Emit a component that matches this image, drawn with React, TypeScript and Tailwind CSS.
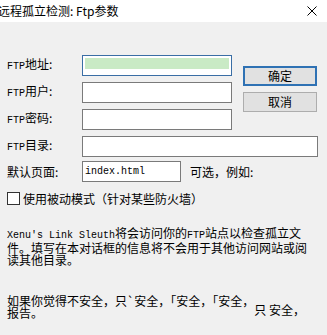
import React from 'react';

const cjk = { fontFamily: '"Noto Sans CJK SC", "Microsoft YaHei", sans-serif' };
const mono = { fontFamily: '"Liberation Mono", "Courier New", monospace' };

function Latin({ children }: { children: React.ReactNode }) {
    return (
        <span className="text-[10px]" style={mono}>
            {children}
        </span>
    );
}

function Field({ label, width, focused }: { label: string; width: string; focused?: boolean }) {
    return (
        <div className="flex items-center h-[21px]">
            <div className="w-[75px] text-[12px] leading-[12px] whitespace-nowrap">
                <Latin>FTP</Latin>
                {label}
            </div>
            <div
                className={`${width} h-[21px] bg-white border ${focused ? 'border-[#3a6ea5]' : 'border-[#7a7a7a]'} p-[2px]`}
            >
                {focused && <div className="h-[11px] bg-[#c9eac5]" />}
            </div>
        </div>
    );
}

export default function App() {
    return (
        <div className="w-[327px] h-[335px] bg-[#f0f0f0] text-black overflow-hidden" style={cjk}>
            {/* title bar */}
            <div className="h-[22px] bg-white flex items-center justify-between pr-[10px]">
                <span className="-ml-[2px] text-[12px] leading-[12px] whitespace-nowrap">远程孤立检测: Ftp参数</span>
                <svg width="10" height="10" viewBox="0 0 10 10">
                    <path d="M0.5 0.5L9.5 9.5M9.5 0.5L0.5 9.5" stroke="#000" strokeWidth="1" />
                </svg>
            </div>

            <div className="pl-[7px] pt-[33px]">
                <div className="flex">
                    <div className="flex flex-col gap-[6px]">
                        <Field label="地址:" width="w-[150px]" focused />
                        <Field label="用户:" width="w-[150px]" />
                        <Field label="密码:" width="w-[150px]" />
                    </div>
                    <div className="ml-[11px] mt-[11px] flex flex-col gap-[6px]">
                        <button className="w-[74px] h-[20px] bg-[#e1e1e1] border-2 border-[#2f72b4] text-[12px] leading-[12px]">
                            确定
                        </button>
                        <button className="w-[74px] h-[20px] bg-[#e1e1e1] border border-[#adadad] text-[12px] leading-[12px]">
                            取消
                        </button>
                    </div>
                </div>

                <div className="mt-[6px]">
                    <Field label="目录:" width="w-[236px]" />
                </div>

                <div className="mt-[4px] flex items-center h-[21px]">
                    <div className="w-[75px] text-[12px] leading-[12px]">默认页面:</div>
                    <div className="w-[99px] h-[21px] bg-white border border-[#7a7a7a] flex items-center pl-[2px]">
                        <Latin>index.html</Latin>
                    </div>
                    <span className="ml-[9px] text-[12px] leading-[12px]">可选，例如:</span>
                </div>

                <label className="mt-[10px] flex items-center h-[13px]">
                    <span className="w-[13px] h-[13px] bg-white border border-[#333]" />
                    <span className="ml-[3px] text-[12px] leading-[12px] whitespace-nowrap">使用被动模式（针对某些防火墙）</span>
                </label>

                <p className="mt-[22px] text-[12px] leading-[12px] whitespace-nowrap">
                    <Latin>Xenu's Link Sleuth</Latin>将会访问你的<Latin>FTP</Latin>站点以检查孤立文
                    <br />
                    件。填写在本对话框的信息将不会用于其他访问网站或阅
                    <br />
                    读其他目录。
                </p>

                <p className="mt-[29px] text-[12px] leading-[12px] whitespace-nowrap">
                    如果你觉得不安全，只`安全，「安全，「安全，
                    <span className="relative top-[9px]">只 安全，</span>
                    <br />
                    报告。
                </p>
            </div>
        </div>
    );
}
